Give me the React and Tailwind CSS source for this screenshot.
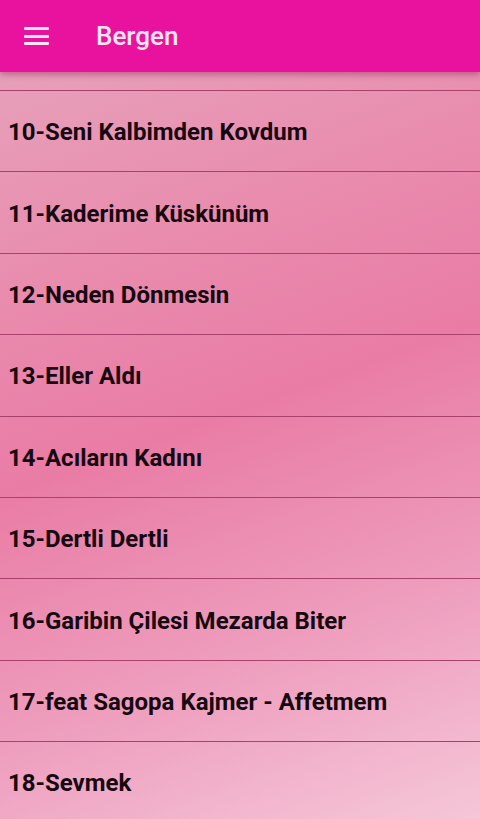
import React from "react";

const songs = [
  "10-Seni Kalbimden Kovdum",
  "11-Kaderime Küskünüm",
  "12-Neden Dönmesin",
  "13-Eller Aldı",
  "14-Acıların Kadını",
  "15-Dertli Dertli",
  "16-Garibin Çilesi Mezarda Biter",
  "17-feat Sagopa Kajmer - Affetmem",
  "18-Sevmek",
];

export default function App() {
  return (
    <div
      className="w-[480px] h-[819px] overflow-hidden flex flex-col bg-[linear-gradient(160deg,#e6a6bd_0%,#e98cae_30%,#e97ca5_50%,#ee9dbd_75%,#f5c6d8_100%)]"
      style={{ fontFamily: "Roboto, 'Liberation Sans', sans-serif" }}
    >
      <header className="relative z-10 h-[72px] shrink-0 bg-[#e8129e] flex items-center shadow-[0_3px_6px_rgba(120,0,60,0.35)]">
        <div className="w-[25px] ml-[24px] flex flex-col gap-[4.5px]">
          <span className="block h-[3px] bg-[#fce4f2] rounded-[1px]" />
          <span className="block h-[3px] bg-[#fce4f2] rounded-[1px]" />
          <span className="block h-[3px] bg-[#fce4f2] rounded-[1px]" />
        </div>
        <h1 className="ml-[47px] text-[26px] font-medium text-[#fce4f2] leading-none">Bergen</h1>
      </header>
      <div className="flex-1 flex flex-col">
        <div className="h-[19px] shrink-0 border-b-[1.5px] border-[#a8426c]" />
        {songs.map((s) => (
          <div
            key={s}
            className="h-[81.4px] shrink-0 flex items-center pl-[8px] pt-[2px] border-b-[1.5px] border-[#a8426c]"
          >
            <span className="text-[24px] font-bold text-[#160810] leading-none">{s}</span>
          </div>
        ))}
      </div>
    </div>
  );
}
